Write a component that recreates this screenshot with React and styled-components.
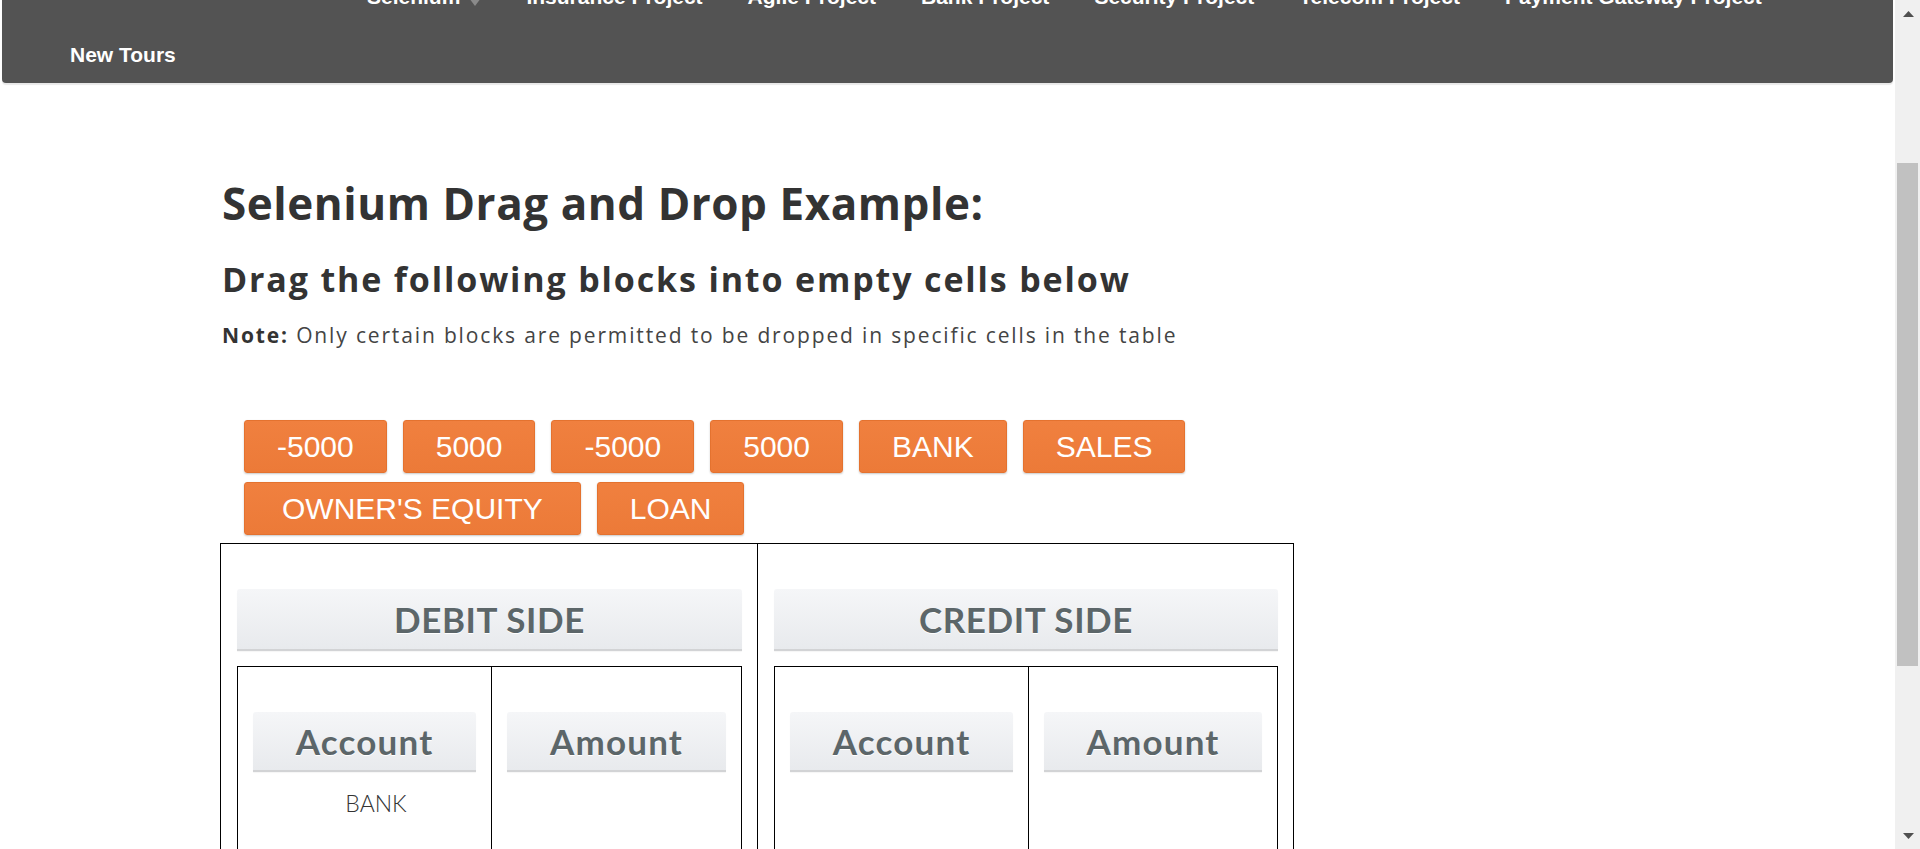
import React from "react";
import styled, { createGlobalStyle } from "styled-components";

const GlobalStyle = createGlobalStyle`
  html, body {
    margin: 0;
    padding: 0;
    overflow: hidden;
    background: #fff;
  }
  * {
    box-sizing: border-box;
  }
`;

const Shell = styled.div`
  display: flex;
  width: 100vw;
  height: 100vh;
`;

const Viewport = styled.div`
  flex: 1;
  height: 100vh;
  overflow: hidden;
`;

/* the page is scrolled down a little, so the first menu row is cut off */
const Page = styled.div`
  margin-top: -15px;
`;

const Nav = styled.nav`
  margin: 0 2px;
  padding: 0 0 16px;
  background: #535353;
  border-radius: 0 0 4px 4px;
  box-shadow: 0 2px 1px rgba(0, 0, 0, 0.09);
  font-family: "Liberation Sans", Arial, sans-serif;
  font-weight: 700;
  font-size: 21px;
  line-height: 24px;
  color: #fff;
`;

const NavRow = styled.div`
  display: flex;
  align-items: flex-start;
  gap: 45px;
  height: 24px;
  padding-left: ${(p) => p.$indent}px;
  margin-bottom: ${(p) => p.$after || 0}px;
`;

const NavItem = styled.a`
  display: flex;
  align-items: flex-start;
  color: #fff;
  text-decoration: none;
  white-space: nowrap;
`;

const Caret = styled.span`
  width: 0;
  height: 0;
  margin: 13px 0 0 9px;
  border-top: 8px solid #8a8a8a;
  border-left: 6px solid transparent;
  border-right: 6px solid transparent;
`;

const Content = styled.main`
  padding-left: 222px;
  font-family: "Open Sans", "Liberation Sans", sans-serif;
  color: #333;
`;

const Title = styled.h2`
  margin: 94px 0 0;
  font-size: 44px;
  line-height: 52px;
  font-weight: 700;
  letter-spacing: 0.55px;
`;

const SubTitle = styled.h3`
  margin: 30px 0 0;
  font-size: 34px;
  line-height: 40px;
  font-weight: 700;
  letter-spacing: 1.85px;
`;

const Note = styled.p`
  margin: 23px 0 0;
  font-size: 21px;
  line-height: 26px;
  font-weight: 400;
  color: #444;
  letter-spacing: 1.85px;

  b {
    font-weight: 700;
    color: #333;
  }
`;

const BlockArea = styled.div`
  display: flex;
  flex-wrap: wrap;
  gap: 9px 16px;
  width: 1072px;
  margin: 72px 0 8px;
  padding-left: 22px;
`;

const Block = styled.div`
  height: 53px;
  padding: 0 ${(p) => p.$pad || 32}px;
  background: linear-gradient(#f0803f, #ec7a38);
  border: 1px solid #e4722f;
  border-radius: 3px;
  box-shadow: 0 1px 2px rgba(0, 0, 0, 0.22);
  color: #fff;
  font-family: "Liberation Sans", Arial, sans-serif;
  font-size: 30px;
  line-height: 51px;
  white-space: nowrap;
  cursor: move;
`;

const Ledger = styled.div`
  display: grid;
  grid-template-columns: 536px 1fr;
  width: 1074px;
  margin-left: -2px;
  border: 1px solid #000;
`;

const Side = styled.div`
  padding: 45px 15px 0 16px;
  border-left: ${(p) => (p.$divider ? "1px solid #000" : "none")};
`;

const Heading = styled.div`
  height: ${(p) => (p.$small ? 60 : 62)}px;
  background: linear-gradient(#f5f6f8, #e8eaed);
  border-bottom: 2px solid #d2d3d5;
  border-radius: 3px 3px 0 0;
  box-shadow: 0 1px 1px rgba(0, 0, 0, 0.04);
  color: #5c6669;
  font-family: "Lato", "Liberation Sans", sans-serif;
  font-weight: 700;
  font-size: 35px;
  line-height: ${(p) => (p.$small ? 58 : 60)}px;
  letter-spacing: ${(p) => (p.$small ? 1.2 : 0.6)}px;
  text-align: center;
  text-shadow: 0 1px 0 #fff;
`;

const Entries = styled.div`
  display: grid;
  grid-template-columns: 253px 1fr;
  margin-top: 15px;
  border: 1px solid #000;
`;

const Column = styled.div`
  min-height: 320px;
  padding: 45px 15px 0;
  border-left: ${(p) => (p.$divider ? "1px solid #000" : "none")};
`;

const Drops = styled.ul`
  margin: 17px 0 0;
  padding: 0 0 0 23px;
  list-style: none;
  text-align: center;
`;

const Entry = styled.li`
  font-family: "Lato", "Liberation Sans", sans-serif;
  font-size: 23px;
  line-height: 28px;
  font-weight: 300;
  color: #333;
`;

const Scrollbar = styled.div`
  display: flex;
  flex-direction: column;
  width: 25px;
  height: 100vh;
  background: #f0f0f0;
`;

const ScrollArrow = styled.div`
  display: flex;
  align-items: center;
  justify-content: center;
  height: 27px;
  padding-left: 1px;
`;

const Track = styled.div`
  flex: 1;
  padding: 136px 2px 0;
`;

const Thumb = styled.div`
  height: 503px;
  background: #c1c1c1;
`;

const Arrow = ({ down }) => (
  <svg width="11" height="6" viewBox="0 0 11 6">
    <path d={down ? "M0 0 H11 L5.5 6 Z" : "M0 6 H11 L5.5 0 Z"} fill="#505050" />
  </svg>
);

const menuTop = [
  "Insurance Project",
  "Agile Project",
  "Bank Project",
  "Security Project",
  "Telecom Project",
  "Payment Gateway Project",
];

const blocks = [
  { label: "-5000" },
  { label: "5000" },
  { label: "-5000" },
  { label: "5000" },
  { label: "BANK" },
  { label: "SALES" },
  { label: "OWNER'S EQUITY", pad: 37 },
  { label: "LOAN" },
];

const LedgerSide = ({ title, divider, account }) => (
  <Side $divider={divider}>
    <Heading>{title}</Heading>
    <Entries>
      <Column>
        <Heading $small>Account</Heading>
        <Drops>{account && <Entry>{account}</Entry>}</Drops>
      </Column>
      <Column $divider>
        <Heading $small>Amount</Heading>
        <Drops />
      </Column>
    </Entries>
  </Side>
);

const App = () => {
  return (
    <Shell>
      <GlobalStyle />
      <Viewport>
        <Page>
          <Nav>
            <NavRow $indent={365} $after={34}>
              <NavItem href="#">
                Selenium
                <Caret />
              </NavItem>
              {menuTop.map((item) => (
                <NavItem key={item} href="#">
                  {item}
                </NavItem>
              ))}
            </NavRow>
            <NavRow $indent={68}>
              <NavItem href="#">New Tours</NavItem>
            </NavRow>
          </Nav>

          <Content>
            <Title>Selenium Drag and Drop Example:</Title>
            <SubTitle>Drag the following blocks into empty cells below</SubTitle>
            <Note>
              <b>Note:</b> Only certain blocks are permitted to be dropped in specific cells in the table
            </Note>

            <BlockArea>
              {blocks.map((b, i) => (
                <Block key={i} $pad={b.pad}>
                  {b.label}
                </Block>
              ))}
            </BlockArea>

            <Ledger>
              <LedgerSide title="DEBIT SIDE" account="BANK" />
              <LedgerSide title="CREDIT SIDE" divider />
            </Ledger>
          </Content>
        </Page>
      </Viewport>
      <Scrollbar>
        <ScrollArrow>
          <Arrow />
        </ScrollArrow>
        <Track>
          <Thumb />
        </Track>
        <ScrollArrow>
          <Arrow down />
        </ScrollArrow>
      </Scrollbar>
    </Shell>
  );
};

export default App;
